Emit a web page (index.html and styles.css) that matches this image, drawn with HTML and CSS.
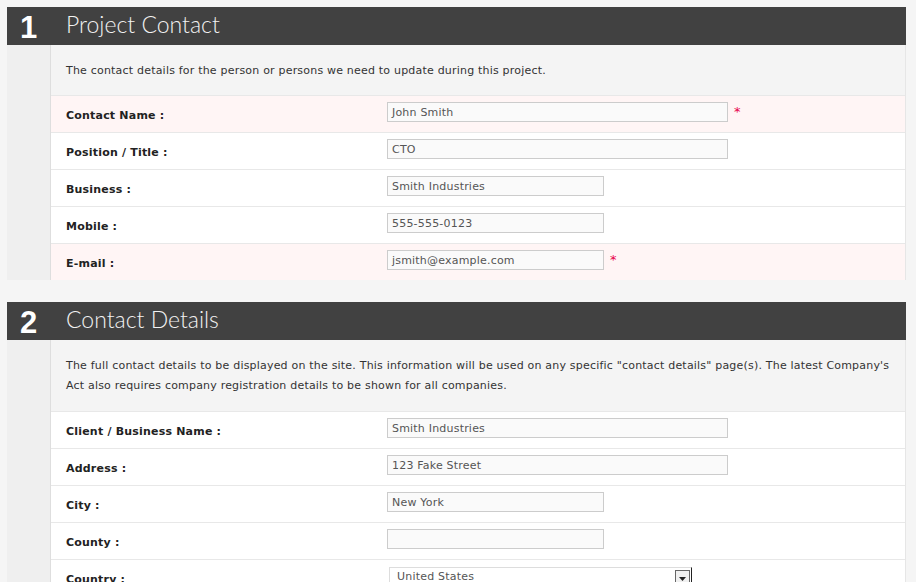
FILE: index.html
```html
<!DOCTYPE html>
<html>
<head>
<meta charset="utf-8">
<link rel="stylesheet" href="styles.css">
</head>
<body>
<div class="section">
  <div class="section-head">
    <div class="num">1</div>
    <div class="title">Project Contact</div>
  </div>
  <div class="section-body">
    <div class="gutter"></div>
    <div class="content">
      <div class="intro">The contact details for the person or persons we need to update during this project.</div>
      <div class="row req">
        <div class="label">Contact Name :</div>
        <div class="field"><span class="input wide">John Smith</span><span class="star">*</span></div>
      </div>
      <div class="row">
        <div class="label">Position / Title :</div>
        <div class="field"><span class="input wide">CTO</span></div>
      </div>
      <div class="row">
        <div class="label">Business :</div>
        <div class="field"><span class="input">Smith Industries</span></div>
      </div>
      <div class="row">
        <div class="label">Mobile :</div>
        <div class="field"><span class="input">555-555-0123</span></div>
      </div>
      <div class="row req">
        <div class="label">E-mail :</div>
        <div class="field"><span class="input">jsmith@example.com</span><span class="star">*</span></div>
      </div>
    </div>
  </div>
</div>

<div class="section">
  <div class="section-head">
    <div class="num">2</div>
    <div class="title">Contact Details</div>
  </div>
  <div class="section-body">
    <div class="gutter"></div>
    <div class="content">
      <div class="intro multi">The full contact details to be displayed on the site. This information will be used on any specific "contact details" page(s). The latest Company's Act also requires company registration details to be shown for all companies.</div>
      <div class="row">
        <div class="label">Client / Business Name :</div>
        <div class="field"><span class="input wide">Smith Industries</span></div>
      </div>
      <div class="row">
        <div class="label">Address :</div>
        <div class="field"><span class="input wide">123 Fake Street</span></div>
      </div>
      <div class="row">
        <div class="label">City :</div>
        <div class="field"><span class="input">New York</span></div>
      </div>
      <div class="row">
        <div class="label">County :</div>
        <div class="field"><span class="input"></span></div>
      </div>
      <div class="row">
        <div class="label">Country :</div>
        <div class="field"><span class="select">United States<span class="arrow"><svg width="9" height="9" viewBox="0 0 9 9"><path d="M1 3h7L4.5 7z" fill="#222"/></svg></span></span></div>
      </div>
    </div>
  </div>
</div>
</body>
</html>
```

FILE: styles.css
```css
html, body {
  margin: 0;
  padding: 0;
  background: #f5f5f5;
}
body {
  padding: 7px 10px 0 7px;
  font-family: "DejaVu Sans", Verdana, sans-serif;
  font-size: 11px;
  letter-spacing: 0.2px;
  color: #333;
}
.section {
  margin-bottom: 22px;
}
.section-head {
  display: flex;
  height: 38px;
  background: #414141;
  color: #fff;
}
.num {
  width: 43px;
  text-align: center;
  font-family: "Liberation Sans", Arial, sans-serif;
  font-weight: bold;
  font-size: 31px;
  line-height: 42px;
  letter-spacing: 0;
}
.title {
  padding-left: 16px;
  font-family: "Lato", "Liberation Sans", sans-serif;
  font-weight: 300;
  font-size: 23px;
  line-height: 35px;
  letter-spacing: 0;
  color: #f2f2f2;
}
.section-body {
  display: flex;
}
.gutter {
  width: 43px;
  background: #efefef;
  border-right: 1px solid #dedede;
}
.content {
  flex: 1;
  border-right: 1px solid #e6e6e6;
}
.intro {
  padding: 16px 15px 14px;
  line-height: 20px;
  background: #f4f4f4;
  color: #333;
}
.intro.multi {
  padding-bottom: 15px;
}
.row {
  display: flex;
  height: 36px;
  border-top: 1px solid #e8e8e8;
  background: #fff;
}
.row.req {
  background: #fff5f5;
}
.label {
  width: 336px;
  flex: none;
  padding-left: 15px;
  padding-top: 13px;
  box-sizing: border-box;
  font-weight: bold;
  color: #222;
}
.field {
  display: flex;
  align-items: flex-start;
  padding-top: 6px;
}
.input {
  display: block;
  box-sizing: border-box;
  width: 217px;
  height: 20px;
  padding-left: 4px;
  padding-top: 1px;
  line-height: 17px;
  background: #fafafa;
  border: 1px solid #cccccc;
  color: #555;
}
.input.wide {
  width: 341px;
}
.star {
  margin-left: 6px;
  margin-top: 2px;
  color: #e8004a;
  font-size: 13px;
  line-height: 16px;
}
.select {
  display: flex;
  justify-content: space-between;
  box-sizing: border-box;
  width: 303px;
  height: 20px;
  margin-left: 2px;
  margin-top: 1px;
  padding-left: 7px;
  line-height: 18px;
  background: #fff;
  border: 1px solid #ddd;
  border-right: 1px solid #222;
  color: #555;
}
.arrow {
  display: flex;
  align-items: center;
  justify-content: center;
  width: 13px;
  height: 14px;
  margin: 2px 1px 0 0;
  border: 1px solid #666;
  background: #f0f0f0;
}
```
